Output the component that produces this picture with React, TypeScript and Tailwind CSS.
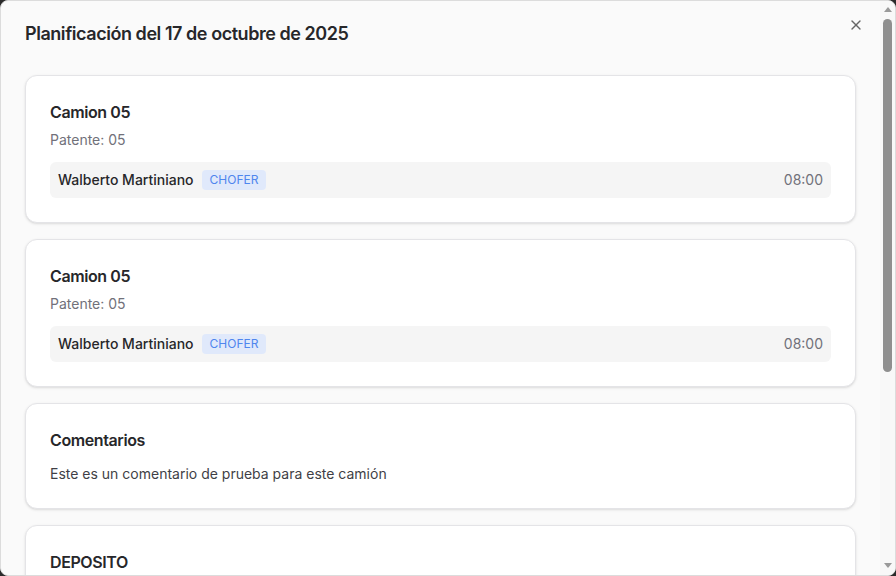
import React from "react";
import { X } from "lucide-react";

type Asignacion = { camion: string; patente: string; chofer: string; rol: string; hora: string };

const asignaciones: Asignacion[] = [
  { camion: "Camion 05", patente: "05", chofer: "Walberto Martiniano", rol: "CHOFER", hora: "08:00" },
  { camion: "Camion 05", patente: "05", chofer: "Walberto Martiniano", rol: "CHOFER", hora: "08:00" },
];

export default function App() {
  return (
    <div className="h-[576px] w-[896px] bg-[#2b2b2b] font-['Inter',sans-serif]">
      <div className="flex h-full w-full overflow-hidden rounded-lg border border-[#dcdcdc] bg-[#fafafa]">
        {/* Modal content */}
        <div className="relative flex-1 overflow-hidden px-6 pt-[19px]">
          <button className="absolute right-4 top-4 text-[#666]">
            <X className="h-4 w-4" strokeWidth={2} />
          </button>

          <h2 className="text-lg font-semibold leading-7 tracking-tight text-[#27272a]">
            Planificación del 17 de octubre de 2025
          </h2>

          <div className="mt-[27px] flex flex-col gap-4">
            {asignaciones.map((a, i) => (
              <div key={i} className="rounded-xl border border-[#e4e4e7] bg-white p-6 shadow-sm">
                <h3 className="text-base font-semibold leading-6 tracking-tight text-[#27272a]">{a.camion}</h3>
                <p className="mt-1.5 text-sm leading-5 text-[#71717a]">Patente: {a.patente}</p>
                <div className="mt-3 flex h-9 items-center justify-between rounded-md bg-[#f5f5f5] px-2">
                  <div className="flex items-center gap-2">
                    <span className="text-sm font-medium text-[#27272a]">{a.chofer}</span>
                    <span className="rounded bg-[#e0e9fb] px-2 py-0.5 text-xs leading-4 text-[#4f86ee]">{a.rol}</span>
                  </div>
                  <span className="text-sm text-[#71717a]">{a.hora}</span>
                </div>
              </div>
            ))}

            <div className="rounded-xl border border-[#e4e4e7] bg-white p-6 shadow-sm">
              <h3 className="text-base font-semibold leading-6 tracking-tight text-[#27272a]">Comentarios</h3>
              <p className="mt-3 text-sm leading-5 text-[#3f3f46]">Este es un comentario de prueba para este camión</p>
            </div>

            <div className="rounded-xl border border-[#e4e4e7] bg-white p-6 shadow-sm">
              <h3 className="text-base font-semibold leading-6 tracking-tight text-[#27272a]">DEPOSITO</h3>
              <p className="mt-3 text-sm leading-5 text-[#3f3f46]">Depósito Central</p>
            </div>
          </div>
        </div>

        {/* Scrollbar */}
        <div className="flex w-[15px] shrink-0 flex-col items-center bg-[#f8f8f8]">
          <div className="mt-[6px] h-0 w-0 border-x-[4px] border-b-[5px] border-x-transparent border-b-[#9a9a9a]" />
          <div className="mt-[7px] h-[353px] w-[9px] rounded-full bg-[#8f8f8f]" />
          <div className="mb-[7px] mt-auto h-0 w-0 border-x-[4px] border-t-[5px] border-x-transparent border-t-[#9a9a9a]" />
        </div>
      </div>
    </div>
  );
}
